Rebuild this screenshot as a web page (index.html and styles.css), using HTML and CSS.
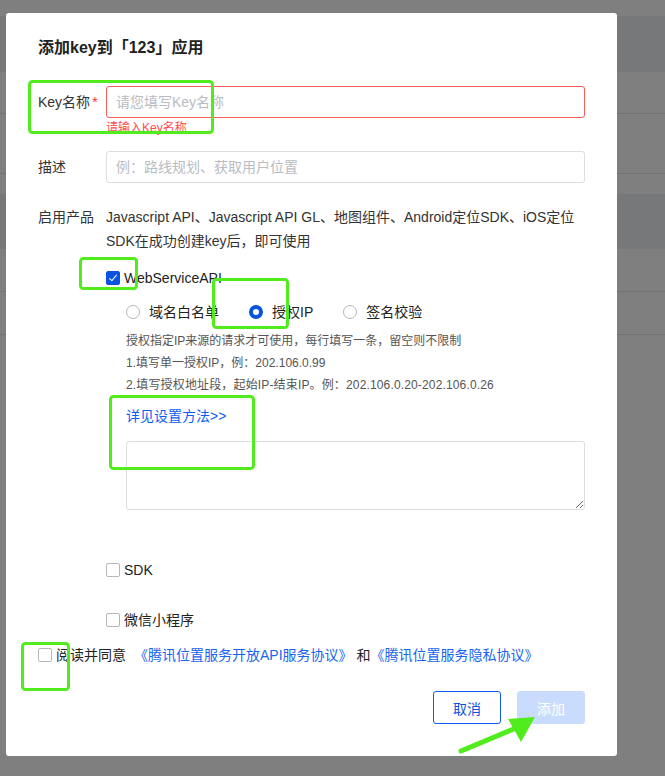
FILE: index.html
```html
<!DOCTYPE html>
<html lang="zh-CN">
<head>
	<meta charset="utf-8" />
	<title>添加key</title>
	<link rel="stylesheet" href="styles.css">
</head>
<body>
	<!-- page behind the mask -->
	<div class="page">
		<div class="band band-top"></div>
		<div class="band band-head"></div>
		<div class="band row-a"></div>
		<div class="band row-b"></div>
		<div class="band row-gap"></div>
		<div class="band band-head2"></div>
		<div class="band row-c"></div>
		<div class="band row-d"></div>
	</div>

	<div class="dialog">
		<h2 class="dialog-title">添加key到「123」应用</h2>

		<div class="form">
			<div class="field">
				<div class="field-label">Key名称<span class="req">*</span></div>
				<div class="field-body">
					<input class="input input-error" type="text" placeholder="请您填写Key名称" />
					<div class="error-tip">请输入Key名称</div>
				</div>
			</div>

			<div class="field field-desc">
				<div class="field-label">描述</div>
				<div class="field-body">
					<input class="input" type="text" placeholder="例：路线规划、获取用户位置" />
				</div>
			</div>

			<div class="field field-product">
				<div class="field-label label-text">启用产品</div>
				<div class="field-body">
					<p class="product-note">Javascript API、Javascript API GL、地图组件、Android定位SDK、iOS定位 SDK在成功创建key后，即可使用</p>

					<label class="check check-ws"><span class="box box-on"></span>WebServiceAPI</label>

					<div class="sub">
						<div class="radios">
							<label class="radio"><span class="dot"></span>域名白名单</label>
							<label class="radio"><span class="dot dot-on"></span>授权IP</label>
							<label class="radio"><span class="dot"></span>签名校验</label>
						</div>
						<div class="help">
							<p>授权指定IP来源的请求才可使用，每行填写一条，留空则不限制</p>
							<p>1.填写单一授权IP，例：202.106.0.99</p>
							<p>2.填写授权地址段，起始IP-结束IP。例：202.106.0.20-202.106.0.26</p>
						</div>
						<a class="more" href="javascript:void(0);">详见设置方法&gt;&gt;</a>
						<textarea class="ip-list"></textarea>
					</div>

					<label class="check check-sdk"><span class="box"></span>SDK</label>
					<label class="check check-mini"><span class="box"></span>微信小程序</label>
				</div>
			</div>

			<div class="agree">
				<span class="box"></span>阅读并同意
				<a class="agree-link first" href="javascript:void(0);">《腾讯位置服务开放API服务协议》</a>
				<span class="and">和</span>
				<a class="agree-link" href="javascript:void(0);">《腾讯位置服务隐私协议》</a>
			</div>

			<div class="actions">
				<button class="btn btn-cancel" type="button">取消</button>
				<button class="btn btn-ok" type="button">添加</button>
			</div>
		</div>
	</div>

	<!-- screenshot annotations -->
	<svg class="marks" width="665" height="776" viewBox="0 0 665 776">
		<g fill="none" stroke="#50ec1c" stroke-width="3">
			<rect x="29.5" y="81.5" width="183" height="51" rx="3" />
			<rect x="80.5" y="258.5" width="56" height="30" rx="3" />
			<rect x="213.5" y="279.5" width="74" height="48" rx="3" />
			<rect x="110.5" y="396.5" width="143" height="72" rx="3" />
			<rect x="22.5" y="643.5" width="46" height="46" rx="3" />
			<line x1="461" y1="751" x2="516" y2="728" stroke-width="5" stroke-linecap="round" />
		</g>
		<polygon points="535,717 508,719 521,742" fill="#50ec1c" />
	</svg>
</body>
</html>
```

FILE: styles.css
```css
body {
	margin: 0;
	height: 776px;
	overflow: hidden;
	position: relative;
	background: #7f7f7f;
	font-family: "Liberation Sans", "Noto Sans CJK SC", sans-serif;
	color: #333;
}
p { margin: 0; }

/* background page under the mask */
.band { width: 100%; box-sizing: border-box; }
.band-top { height: 16px; }
.band-head { height: 56px; background: #77787a; }
.row-a { height: 42px; border-bottom: 1px solid #737373; }
.row-b { height: 60px; border-bottom: 1px solid #737373; }
.row-gap { height: 20px; }
.band-head2 { height: 55px; background: #77787a; }
.row-c { height: 43px; border-bottom: 1px solid #737373; }
.row-d { height: 43px; border-bottom: 1px solid #737373; }

/* dialog */
.dialog {
	position: absolute;
	left: 6px;
	top: 13px;
	width: 611px;
	height: 743px;
	box-sizing: border-box;
	padding: 24px 32px 0;
	background: #fff;
	border-radius: 3px;
}
.dialog-title {
	margin: 0;
	font-size: 16px;
	line-height: 22px;
	font-weight: bold;
	color: #222;
}
.form { margin-top: 27px; }

.field { display: flex; }
.field-label {
	width: 68px;
	flex: none;
	font-size: 14px;
	line-height: 32px;
	color: #333;
}
.req { color: #f33; margin-left: 2px; }
.field-body { flex: 1; min-width: 0; }

.input {
	display: block;
	width: 100%;
	height: 32px;
	box-sizing: border-box;
	padding: 0 9px;
	border: 1px solid #dcdee3;
	border-radius: 3px;
	font: 14px "Liberation Sans", "Noto Sans CJK SC", sans-serif;
	color: #333;
	outline: none;
}
.input::placeholder { color: #b9bcc2; }
.input-error { border-color: #f95a5a; }
.error-tip {
	margin-top: 3px;
	font-size: 12px;
	line-height: 14px;
	color: #ff4d4f;
}
.field-desc { margin-top: 16px; }
.field-product { margin-top: 22px; }
.label-text { line-height: 24px; }

.product-note {
	font-size: 14px;
	line-height: 24px;
	color: #333;
}

.check {
	display: flex;
	align-items: center;
	font-size: 14px;
	line-height: 20px;
	color: #222;
}
.check-ws { margin-top: 15px; }
.check-sdk { margin-top: 50px; }
.check-mini { margin-top: 30px; }

.box {
	width: 14px;
	height: 14px;
	box-sizing: border-box;
	border: 1px solid #b6b6b6;
	border-radius: 2px;
	margin-right: 4px;
	flex: none;
	position: relative;
	background: #fff;
}
.box-on { background: #0a52e0; border-color: #0a52e0; }
.box-on::after {
	content: "";
	position: absolute;
	left: 4px;
	top: 1px;
	width: 3px;
	height: 7px;
	border: solid #fff;
	border-width: 0 1.5px 1.5px 0;
	transform: rotate(40deg);
}

.sub { padding-left: 20px; }
.radios { display: flex; margin-top: 14px; }
.radio {
	display: flex;
	align-items: center;
	font-size: 14px;
	line-height: 20px;
	color: #222;
	margin-right: 30px;
}
.dot {
	width: 14px;
	height: 14px;
	box-sizing: border-box;
	border: 1px solid #b6b6b6;
	border-radius: 50%;
	margin-right: 9px;
}
.dot-on { border: 4px solid #0a52e0; }

.help { margin-top: 8px; }
.help p {
	font-size: 12px;
	line-height: 22px;
	color: #555;
}
.help p:last-child { letter-spacing: 0.15px; }
.more {
	display: block;
	margin-top: 10px;
	font-size: 14px;
	line-height: 20px;
	color: #0a5ef0;
	text-decoration: none;
}
.ip-list {
	display: block;
	margin-top: 15px;
	width: 100%;
	height: 69px;
	box-sizing: border-box;
	border: 1px solid #dcdee3;
	border-radius: 3px;
	resize: vertical;
}

.agree {
	display: flex;
	align-items: center;
	margin-top: 15px;
	font-size: 14px;
	line-height: 20px;
	color: #222;
}
.agree-link { color: #1665f0; text-decoration: none; }
.agree-link.first { margin-left: 8px; }
.and { margin: 0 0 0 4px; }

.actions {
	display: flex;
	justify-content: flex-end;
	gap: 16px;
	margin-top: 26px;
}
.btn {
	width: 68px;
	height: 33px;
	border-radius: 3px;
	font: 14px "Liberation Sans", "Noto Sans CJK SC", sans-serif;
	cursor: pointer;
}
.btn-cancel { background: #fff; border: 1px solid #0a5ef0; color: #0a52e0; }
.btn-ok { background: #cadcfd; border: 1px solid #cadcfd; color: #fff; }

/* annotation layer */
.marks {
	position: absolute;
	left: 0;
	top: 0;
	pointer-events: none;
}
```
